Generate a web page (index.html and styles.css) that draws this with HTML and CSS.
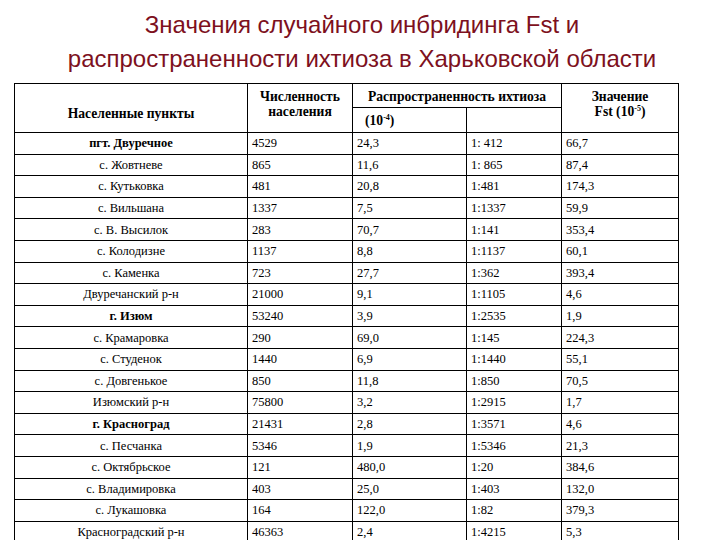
FILE: index.html
```html
<!DOCTYPE html>
<html lang="ru">
<head>
<meta charset="utf-8">
<title>Значения случайного инбридинга Fst</title>
<link rel="stylesheet" href="styles.css">
</head>
<body>
<h1 class="title">Значения случайного инбридинга Fst и<br>распространенности ихтиоза в Харьковской области</h1>
<table class="data">
  <colgroup>
    <col class="c1"><col class="c2"><col class="c3"><col class="c4"><col class="c5">
  </colgroup>
  <thead>
    <tr class="hA">
      <th rowspan="2" class="h-name">Населенные пункты</th>
      <th rowspan="2" class="h-pop">Численность<br>населения</th>
      <th colspan="2" class="h-prev">Распространенность ихтиоза</th>
      <th rowspan="2" class="h-fst">Значение<br>Fst (10<sup>-5</sup>)</th>
    </tr>
    <tr class="hB">
      <th class="h-sub">(10<sup>-4</sup>)</th>
      <th class="h-sub"></th>
    </tr>
  </thead>
  <tbody>
    <tr><td class="name b">пгт. Двуречное</td><td>4529</td><td>24,3</td><td>1: 412</td><td>66,7</td></tr>
    <tr><td class="name">с. Жовтневе</td><td>865</td><td>11,6</td><td>1: 865</td><td>87,4</td></tr>
    <tr><td class="name">с. Кутьковка</td><td>481</td><td>20,8</td><td>1:481</td><td>174,3</td></tr>
    <tr><td class="name">с. Вильшана</td><td>1337</td><td>7,5</td><td>1:1337</td><td>59,9</td></tr>
    <tr><td class="name">с. В. Высилок</td><td>283</td><td>70,7</td><td>1:141</td><td>353,4</td></tr>
    <tr><td class="name">с. Колодизне</td><td>1137</td><td>8,8</td><td>1:1137</td><td>60,1</td></tr>
    <tr><td class="name">с. Каменка</td><td>723</td><td>27,7</td><td>1:362</td><td>393,4</td></tr>
    <tr><td class="name">Двуречанский р-н</td><td>21000</td><td>9,1</td><td>1:1105</td><td>4,6</td></tr>
    <tr><td class="name b">г. Изюм</td><td>53240</td><td>3,9</td><td>1:2535</td><td>1,9</td></tr>
    <tr><td class="name">с. Крамаровка</td><td>290</td><td>69,0</td><td>1:145</td><td>224,3</td></tr>
    <tr><td class="name">с. Студенок</td><td>1440</td><td>6,9</td><td>1:1440</td><td>55,1</td></tr>
    <tr><td class="name">с. Довгенькое</td><td>850</td><td>11,8</td><td>1:850</td><td>70,5</td></tr>
    <tr><td class="name">Изюмский р-н</td><td>75800</td><td>3,2</td><td>1:2915</td><td>1,7</td></tr>
    <tr><td class="name b">г. Красноград</td><td>21431</td><td>2,8</td><td>1:3571</td><td>4,6</td></tr>
    <tr><td class="name">с. Песчанка</td><td>5346</td><td>1,9</td><td>1:5346</td><td>21,3</td></tr>
    <tr><td class="name">с. Октябрьское</td><td>121</td><td>480,0</td><td>1:20</td><td>384,6</td></tr>
    <tr><td class="name">с. Владимировка</td><td>403</td><td>25,0</td><td>1:403</td><td>132,0</td></tr>
    <tr><td class="name">с. Лукашовка</td><td>164</td><td>122,0</td><td>1:82</td><td>379,3</td></tr>
    <tr><td class="name">Красноградский р-н</td><td>46363</td><td>2,4</td><td>1:4215</td><td>5,3</td></tr>
  </tbody>
</table>
</body>
</html>
```

FILE: styles.css
```css
html, body {
  margin: 0;
  padding: 0;
  background: #ffffff;
}
body {
  width: 720px;
  height: 540px;
  overflow: hidden;
}
.title {
  margin: 0;
  padding-top: 8px;
  padding-left: 4px;
  height: 83px;
  box-sizing: border-box;
  font-family: "Liberation Sans", Arial, sans-serif;
  font-weight: normal;
  font-size: 24px;
  line-height: 34px;
  color: #7d1020;
  text-align: center;
}
.data {
  margin-left: 14px;
  border-collapse: collapse;
  table-layout: fixed;
  width: 664px;
  color: #000000;
}
.data, .data th, .data td {
  font-family: "Liberation Serif", "DejaVu Serif", "Times New Roman", serif;
}
.c1 { width: 233px; }
.c2 { width: 105px; }
.c3 { width: 114px; }
.c4 { width: 95px; }
.c5 { width: 117px; }
.data th, .data td {
  border: 1px solid #000000;
  padding: 0 4px;
}
.data th {
  font-weight: bold;
  font-size: 13.6px;
  line-height: 15px;
  vertical-align: top;
  text-align: center;
  padding-top: 5px;
}
.hA { height: 24px; }
.hB { height: 25px; }
.data th.h-name { padding-top: 22px; }
.data th.h-sub { text-align: left; padding-left: 12px; padding-top: 5px; }
sup {
  font-size: 8px;
  line-height: 0;
  vertical-align: 5px;
}
.data td {
  height: 20.6px;
  font-size: 12.5px;
  text-align: left;
  vertical-align: middle;
  line-height: 14px;
}
.data td.name { text-align: center; }
.data td.b { font-weight: bold; }
```
